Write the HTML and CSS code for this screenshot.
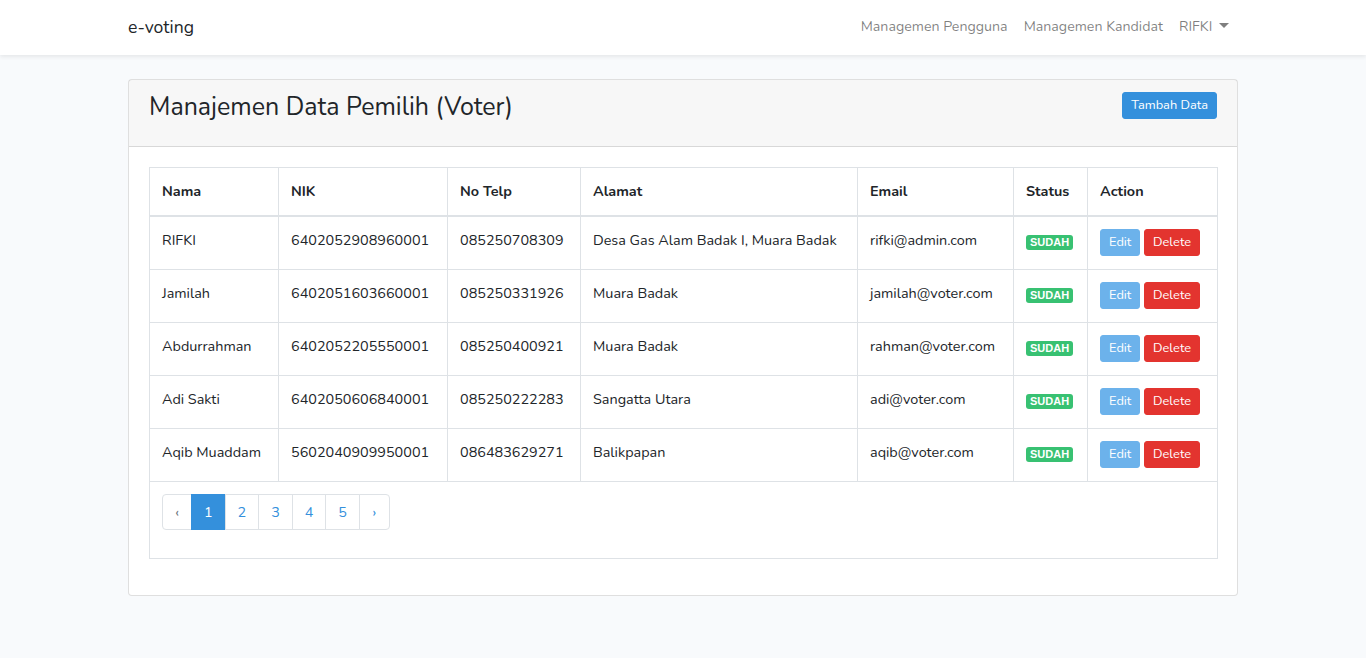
FILE: index.html
```html
<!DOCTYPE html>
<html lang="id">
<head>
<meta charset="utf-8">
<title>e-voting</title>
<link rel="stylesheet" href="styles.css">
</head>
<body>
<nav class="navbar">
  <div class="container nav-inner">
    <a class="brand" href="#">e-voting</a>
    <ul class="nav-links">
      <li><a href="#">Managemen Pengguna</a></li>
      <li><a href="#">Managemen Kandidat</a></li>
      <li><a href="#" class="dropdown">RIFKI <span class="caret"></span></a></li>
    </ul>
  </div>
</nav>
<main class="main">
  <div class="container">
    <div class="card">
      <div class="card-header">
        <h3 class="title">Manajemen Data Pemilih (Voter)</h3>
        <a href="#" class="btn btn-sm btn-primary">Tambah Data</a>
      </div>
      <div class="card-body">
        <table class="table">
          <colgroup>
            <col class="c-nama"><col class="c-nik"><col class="c-telp"><col class="c-alamat"><col class="c-email"><col class="c-status"><col class="c-action">
          </colgroup>
          <thead>
            <tr><th>Nama</th><th>NIK</th><th>No Telp</th><th>Alamat</th><th>Email</th><th>Status</th><th>Action</th></tr>
          </thead>
          <tbody>
            <tr><td>RIFKI</td><td>6402052908960001</td><td>085250708309</td><td>Desa Gas Alam Badak I, Muara Badak</td><td>rifki@admin.com</td><td><span class="badge">SUDAH</span></td><td><a class="btn btn-sm btn-info" href="#">Edit</a> <a class="btn btn-sm btn-danger" href="#">Delete</a></td></tr>
            <tr><td>Jamilah</td><td>6402051603660001</td><td>085250331926</td><td>Muara Badak</td><td>jamilah@voter.com</td><td><span class="badge">SUDAH</span></td><td><a class="btn btn-sm btn-info" href="#">Edit</a> <a class="btn btn-sm btn-danger" href="#">Delete</a></td></tr>
            <tr><td>Abdurrahman</td><td>6402052205550001</td><td>085250400921</td><td>Muara Badak</td><td>rahman@voter.com</td><td><span class="badge">SUDAH</span></td><td><a class="btn btn-sm btn-info" href="#">Edit</a> <a class="btn btn-sm btn-danger" href="#">Delete</a></td></tr>
            <tr><td>Adi Sakti</td><td>6402050606840001</td><td>085250222283</td><td>Sangatta Utara</td><td>adi@voter.com</td><td><span class="badge">SUDAH</span></td><td><a class="btn btn-sm btn-info" href="#">Edit</a> <a class="btn btn-sm btn-danger" href="#">Delete</a></td></tr>
            <tr><td>Aqib Muaddam</td><td>5602040909950001</td><td>086483629271</td><td>Balikpapan</td><td>aqib@voter.com</td><td><span class="badge">SUDAH</span></td><td><a class="btn btn-sm btn-info" href="#">Edit</a> <a class="btn btn-sm btn-danger" href="#">Delete</a></td></tr>
          </tbody>
          <tfoot>
            <tr><td colspan="7" class="foot-cell">
              <ul class="pagination">
                <li class="page disabled"><span>&lsaquo;</span></li>
                <li class="page active"><span>1</span></li>
                <li class="page"><a href="#">2</a></li>
                <li class="page"><a href="#">3</a></li>
                <li class="page"><a href="#">4</a></li>
                <li class="page"><a href="#">5</a></li>
                <li class="page next"><a href="#">&rsaquo;</a></li>
              </ul>
            </td></tr>
          </tfoot>
        </table>
      </div>
    </div>
  </div>
</main>
</body>
</html>
```
FILE: styles.css
```css
* { box-sizing: border-box; }
html, body { margin: 0; }
body {
  background: #f8fafc;
  font-family: "Nunito", "Open Sans", "Noto Sans", sans-serif;
  font-size: 14.4px;
  line-height: 1.6;
  color: #212529;
}
a { text-decoration: none; }
.container { width: 1110px; margin: 0 auto; }

.navbar {
  background: #fff;
  height: 55px;
  box-shadow: 0 .125rem .25rem rgba(0,0,0,.075);
}
.nav-inner {
  display: flex;
  align-items: center;
  justify-content: space-between;
  height: 55px;
}
.brand { font-size: 17.6px; color: #212529; }
.nav-links { list-style: none; display: flex; margin: 0; padding: 0; }
.nav-links a {
  display: block;
  padding: 8px 8px;
  color: rgba(0,0,0,.5);
  font-size: 14.2px;
}
.nav-links li:last-child a { padding-right: 9px; }
.caret {
  display: inline-block;
  margin-left: 3px;
  vertical-align: 3px;
  border-top: 5px solid rgba(0,0,0,.5);
  border-left: 5px solid transparent;
  border-right: 5px solid transparent;
}

.main { padding: 24px 0; }
.card {
  background: #fff;
  border: 1px solid rgba(0,0,0,.125);
  border-radius: 4px;
}
.card-header {
  background: rgba(0,0,0,.03);
  border-bottom: 1px solid rgba(0,0,0,.125);
  height: 67px;
  padding: 12px 20px 0 20px;
  display: flex;
  justify-content: space-between;
  align-items: flex-start;
}
.title {
  margin: 0;
  font-size: 25px;
  font-weight: 400;
  line-height: 30px;
}
.card-body { padding: 20px 20px 21px; }

.btn {
  display: inline-block;
  border: 1px solid transparent;
  border-radius: 3px;
  color: #fff;
  font-size: 12.8px;
  line-height: 19px;
  padding: 3px 8px;
  vertical-align: middle;
}
.btn-primary { background: #3490dc; border-color: #3490dc; }
.btn-info { background: #6cb2eb; border-color: #6cb2eb; }
.btn-danger { background: #e3342f; border-color: #e3342f; }

.table {
  width: 100%;
  border-collapse: collapse;
  table-layout: fixed;
  margin-bottom: 15px;
}
.c-nama { width: 129px; }
.c-nik { width: 169px; }
.c-telp { width: 133px; }
.c-alamat { width: 277px; }
.c-email { width: 156px; }
.c-status { width: 74px; }
.c-action { width: 130px; }
.table th, .table td {
  border: 1px solid #dee2e6;
  padding: 12px 12px;
  text-align: left;
  white-space: nowrap;
  vertical-align: top;
}
.table th {
  font-weight: 700;
  height: 47px;
  border-bottom: 2px solid #dee2e6;
  padding-top: 12px;
}
.table tbody td { height: 53px; padding-top: 12px; }
.table tbody td:nth-child(6) { padding-top: 13px; }
.table tbody td:nth-child(7) { padding-top: 12px; }

.badge {
  display: inline-block;
  background: #38c172;
  color: #fff;
  font-size: 11px;
  font-weight: 700;
  line-height: 1;
  padding: 2px 4px;
  border-radius: 3px;
  font-family: "Liberation Sans", Arial, sans-serif;
}

.foot-cell { padding: 12px 12px 0 12px !important; height: 77px; }
.pagination {
  list-style: none;
  display: flex;
  margin: 0;
  padding: 0;
}
.page a, .page span {
  display: block;
  min-width: 34.6px;
  text-align: center;
  height: 36px;
  line-height: 34px;
  border: 1px solid #dee2e6;
  margin-left: -1px;
  color: #3490dc;
  background: #fff;
  font-size: 14.4px;
}
.page:first-child span { margin-left: 0; border-radius: 4px 0 0 4px; min-width: 30px; }
.page.next a { border-radius: 0 4px 4px 0; min-width: 31px; }
.page.disabled span { color: #6c757d; }
.page.active span { background: #3490dc; border-color: #3490dc; color: #fff; }
```
